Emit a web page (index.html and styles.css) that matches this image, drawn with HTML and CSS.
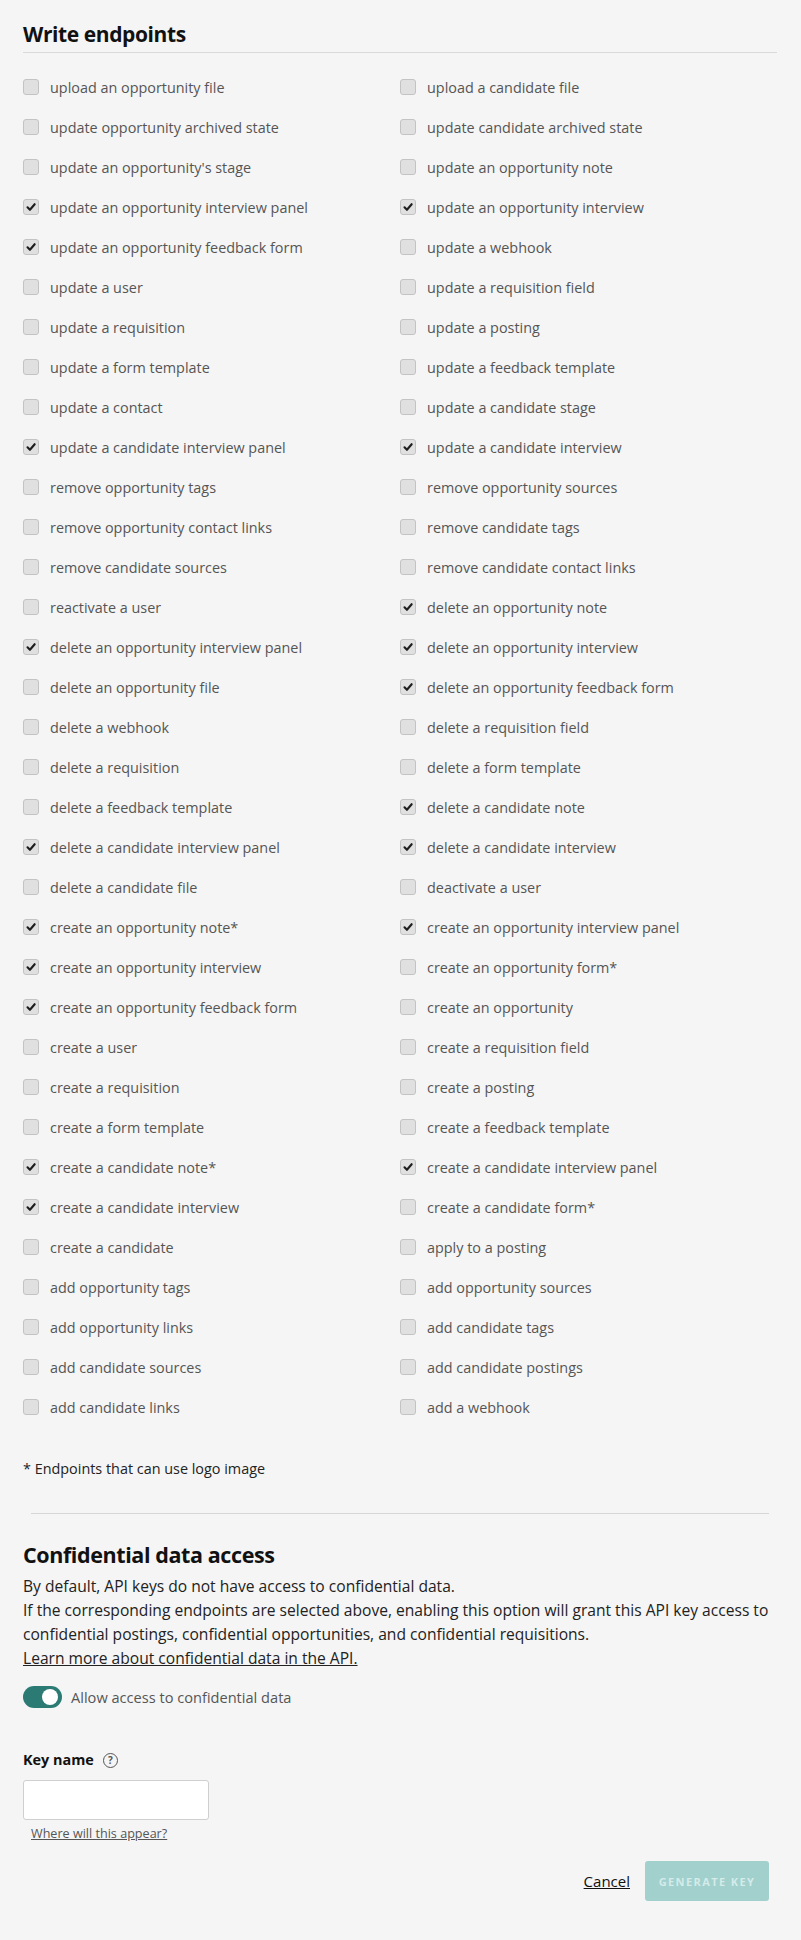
FILE: index.html
```html
<!DOCTYPE html>
<html lang="en">
<head>
    <meta charset="UTF-8">
    <meta name="viewport" content="width=device-width, initial-scale=1.0">
    <title>Write endpoints</title>
    <link rel="stylesheet" href="styles.css">
</head>
<body>
    <div class="page">
        <h2 class="section-title">Write endpoints</h2>
        <div class="endpoints" id="endpoints"></div>
        <p class="footnote">* Endpoints that can use logo image</p>

        <hr class="divider">

        <h2 class="conf-title">Confidential data access</h2>
        <p class="conf-text">By default, API keys do not have access to confidential data.<br>
            If the corresponding endpoints are selected above, enabling this option will grant this API key access to confidential postings, confidential opportunities, and confidential requisitions.<br>
            <a href="#" class="learn">Learn more about confidential data in the API.</a></p>

        <label class="toggle-row">
            <span class="toggle"><span class="knob"></span></span>
            <span class="toggle-label">Allow access to confidential data</span>
        </label>

        <div class="key-name">
            <label for="keyName" class="key-label">Key name <span class="help">?</span></label>
            <input type="text" id="keyName" class="key-input">
            <a href="#" class="where">Where will this appear?</a>
        </div>

        <div class="actions">
            <a href="#" class="cancel">Cancel</a>
            <button type="button" class="generate" disabled>Generate key</button>
        </div>
    </div>

    <script>
        // [left label, left checked, right label, right checked]
        const rows = [
            ["upload an opportunity file", 0, "upload a candidate file", 0],
            ["update opportunity archived state", 0, "update candidate archived state", 0],
            ["update an opportunity's stage", 0, "update an opportunity note", 0],
            ["update an opportunity interview panel", 1, "update an opportunity interview", 1],
            ["update an opportunity feedback form", 1, "update a webhook", 0],
            ["update a user", 0, "update a requisition field", 0],
            ["update a requisition", 0, "update a posting", 0],
            ["update a form template", 0, "update a feedback template", 0],
            ["update a contact", 0, "update a candidate stage", 0],
            ["update a candidate interview panel", 1, "update a candidate interview", 1],
            ["remove opportunity tags", 0, "remove opportunity sources", 0],
            ["remove opportunity contact links", 0, "remove candidate tags", 0],
            ["remove candidate sources", 0, "remove candidate contact links", 0],
            ["reactivate a user", 0, "delete an opportunity note", 1],
            ["delete an opportunity interview panel", 1, "delete an opportunity interview", 1],
            ["delete an opportunity file", 0, "delete an opportunity feedback form", 1],
            ["delete a webhook", 0, "delete a requisition field", 0],
            ["delete a requisition", 0, "delete a form template", 0],
            ["delete a feedback template", 0, "delete a candidate note", 1],
            ["delete a candidate interview panel", 1, "delete a candidate interview", 1],
            ["delete a candidate file", 0, "deactivate a user", 0],
            ["create an opportunity note*", 1, "create an opportunity interview panel", 1],
            ["create an opportunity interview", 1, "create an opportunity form*", 0],
            ["create an opportunity feedback form", 1, "create an opportunity", 0],
            ["create a user", 0, "create a requisition field", 0],
            ["create a requisition", 0, "create a posting", 0],
            ["create a form template", 0, "create a feedback template", 0],
            ["create a candidate note*", 1, "create a candidate interview panel", 1],
            ["create a candidate interview", 1, "create a candidate form*", 0],
            ["create a candidate", 0, "apply to a posting", 0],
            ["add opportunity tags", 0, "add opportunity sources", 0],
            ["add opportunity links", 0, "add candidate tags", 0],
            ["add candidate sources", 0, "add candidate postings", 0],
            ["add candidate links", 0, "add a webhook", 0]
        ];

        const tick = '<svg viewBox="0 0 16 16" width="16" height="16"><path d="M4 8.3 L6.8 11.2 L12.2 4.8" fill="none" stroke="#1e1e1e" stroke-width="2.4" stroke-linecap="round" stroke-linejoin="round"/></svg>';
        const list = document.getElementById("endpoints");

        function addItem(text, checked) {
            const item = document.createElement("label");
            item.className = "endpoint";
            item.innerHTML = '<span class="box">' + (checked ? tick : "") + '</span><span class="endpoint-label"></span>';
            item.querySelector(".endpoint-label").textContent = text;
            list.appendChild(item);
        }

        rows.forEach(function (r) {
            addItem(r[0], r[1]);
            addItem(r[2], r[3]);
        });
    </script>
</body>
</html>
```

FILE: styles.css
```css
body {
    margin: 0;
    background: #f5f5f5;
    font-family: "Open Sans", "Noto Sans", sans-serif;
    color: #222;
}
.page {
    padding: 19px 24px 40px 23px;
}
.section-title {
    margin: 0;
    font-size: 21px;
    letter-spacing: -0.4px;
    line-height: 30px;
    font-weight: 700;
    color: #111;
    padding-bottom: 3px;
    border-bottom: 1px solid #dadada;
}
.endpoints {
    display: grid;
    grid-template-columns: 377px 1fr;
    row-gap: 16px;
    margin-top: 22px;
}
.endpoint {
    display: flex;
    align-items: center;
    gap: 11px;
    height: 24px;
    font-size: 14.4px;
    color: #555;
}
.box {
    width: 16px;
    height: 16px;
    box-sizing: border-box;
    border: 1px solid #c3c3c3;
    border-radius: 3px;
    background: #e0e0e0;
    display: flex;
    align-items: center;
    justify-content: center;
    flex-shrink: 0;
}
.box svg {
    display: block;
}
.footnote {
    margin: 38px 0 0;
    font-size: 14.4px;
    line-height: 24px;
    color: #222;
}
.divider {
    border: none;
    border-top: 1px solid #d6d6d6;
    margin: 32px 8px 0 8px;
}
.conf-title {
    margin: 26px 0 0;
    font-size: 21.5px;
    letter-spacing: -0.4px;
    line-height: 30px;
    font-weight: 700;
    color: #111;
}
.conf-text {
    margin: 4px 0 0;
    font-size: 15.6px;
    line-height: 24px;
    color: #222;
}
.learn {
    color: #222;
}
.toggle-row {
    display: flex;
    align-items: center;
    gap: 9px;
    margin-top: 16px;
}
.toggle {
    width: 39px;
    height: 22px;
    border-radius: 11px;
    background: #2b7b74;
    position: relative;
}
.knob {
    position: absolute;
    top: 3px;
    right: 4px;
    width: 16px;
    height: 16px;
    border-radius: 50%;
    background: #fff;
}
.toggle-label {
    font-size: 14.6px;
    color: #555;
}
.key-name {
    margin-top: 42px;
    display: flex;
    flex-direction: column;
    align-items: flex-start;
}
.key-label {
    font-size: 14.4px;
    font-weight: 700;
    color: #111;
    line-height: 20px;
    display: flex;
    align-items: center;
    gap: 9px;
}
.help {
    width: 13px;
    height: 13px;
    border: 1.5px solid #555;
    border-radius: 50%;
    font-size: 10px;
    line-height: 13px;
    text-align: center;
    color: #555;
    font-weight: 700;
}
.key-input {
    margin-top: 10px;
    width: 186px;
    height: 40px;
    box-sizing: border-box;
    border: 1px solid #cfcfcf;
    border-radius: 3px;
    background: #fff;
}
.where {
    margin: 5px 0 0 8px;
    font-size: 12.6px;
    color: #555;
}
.actions {
    display: flex;
    justify-content: flex-end;
    align-items: center;
    gap: 15px;
    margin-top: 19px;
    padding-right: 8px;
}
.cancel {
    font-size: 15px;
    color: #111;
}
.generate {
    width: 124px;
    height: 40px;
    border: none;
    border-radius: 3px;
    background: #a1d0cd;
    color: #d4ebe9;
    font-family: inherit;
    font-size: 11px;
    font-weight: 700;
    letter-spacing: 1.4px;
    text-transform: uppercase;
}
```
